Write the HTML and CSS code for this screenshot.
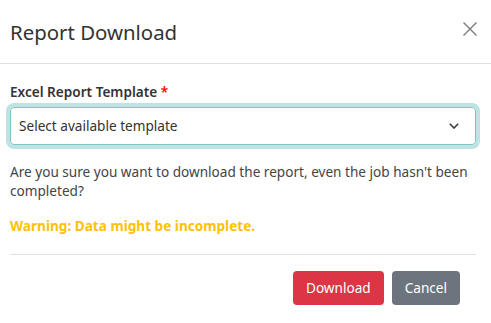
FILE: index.html
```html
<!DOCTYPE html>
<html lang="en">
<head>
    <meta charset="UTF-8">
    <meta name="viewport" content="width=device-width, initial-scale=1.0">
    <title>Report Download</title>
    <link rel="stylesheet" href="styles.css">
</head>
<body>
    <div class="modal">
        <header class="modal-header">
            <h1>Report Download</h1>
            <button class="close" aria-label="Close">
                <svg width="14" height="14" viewBox="0 0 14 14">
                    <path d="M0.5 0.5 L13.5 13.5 M13.5 0.5 L0.5 13.5" stroke="#7a7a7a" stroke-width="1.4" fill="none"/>
                </svg>
            </button>
        </header>
        <main class="modal-body">
            <label class="field-label">Excel Report Template <span class="required">*</span></label>
            <div class="select-box">
                <span>Select available template</span>
                <svg width="10" height="6" viewBox="0 0 10 6">
                    <path d="M0.8 0.8 L5 5 L9.2 0.8" stroke="#343a40" stroke-width="1.6" fill="none"/>
                </svg>
            </div>
            <p class="message">Are you sure you want to download the report, even the job hasn't been completed?</p>
            <p class="warning">Warning: Data might be incomplete.</p>
            <footer class="modal-footer">
                <button class="btn btn-danger">Download</button>
                <button class="btn btn-secondary">Cancel</button>
            </footer>
        </main>
    </div>
</body>
</html>
```

FILE: styles.css
```css
body {
    margin: 0;
    font-family: "Noto Sans", "Open Sans", sans-serif;
    font-size: 13.6px;
    background-color: white;
    color: #444;
}
.modal {
    width: 491px;
}
.modal-header {
    display: flex;
    justify-content: space-between;
    align-items: flex-start;
    padding: 17px 14px 16px 10px;
    border-bottom: 1px solid #dee2e6;
}
.modal-header h1 {
    margin: 0;
    font-size: 20.4px;
    font-weight: 400;
    line-height: 30px;
    color: #333;
}
.close {
    margin-top: 5px;
    padding: 0;
    border: none;
    background: none;
    width: 14px;
    height: 14px;
    display: flex;
}
.modal-body {
    padding: 18px 15px 0 10px;
}
.field-label {
    display: block;
    font-weight: 600;
    line-height: 20px;
    color: #333;
    margin-bottom: 5px;
}
.required {
    color: #ff0000;
}
.select-box {
    display: flex;
    align-items: center;
    justify-content: space-between;
    height: 36px;
    padding: 0 16px 0 8px;
    border: 1px solid #80c4c4;
    border-radius: 4px;
    box-shadow: 0 0 0 4px #bfe2e2;
    color: #333;
}
.select-box span {
    margin-top: -2px;
}
.message {
    margin: 17px 0 0;
    line-height: 19px;
    color: #444;
}
.warning {
    margin: 16px 0 19px;
    font-weight: 700;
    line-height: 19px;
    color: #ffc107;
}
.modal-footer {
    display: flex;
    justify-content: flex-end;
    gap: 8px;
    padding: 16px 16px 16px 0;
    border-top: 1px solid #dee2e6;
}
.btn {
    font-family: inherit;
    font-size: 13.6px;
    line-height: 20px;
    padding: 6px 12px;
    border: 1px solid transparent;
    border-radius: 4px;
    color: white;
    cursor: pointer;
}
.btn-danger {
    background-color: #dc3545;
}
.btn-secondary {
    background-color: #6c757d;
}
```
